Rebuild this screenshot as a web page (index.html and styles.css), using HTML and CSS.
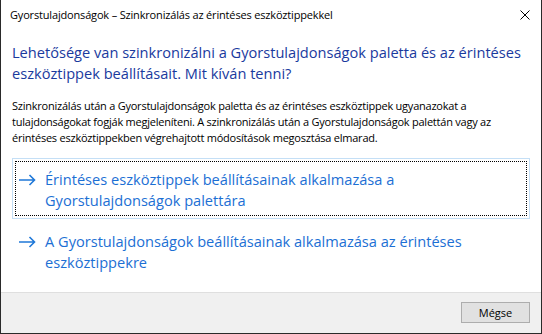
FILE: index.html
```html
<!DOCTYPE html>
<html lang="hu">
<head>
<meta charset="utf-8">
<title>Gyorstulajdonságok</title>
<link rel="stylesheet" href="styles.css">
</head>
<body>
<div class="window">
  <div class="titlebar">
    <span class="title">Gyorstulajdonságok – Szinkronizálás az érintéses eszköztippekkel</span>
    <span class="close" aria-label="Bezárás">
      <svg width="10" height="10" viewBox="0 0 10 10"><path d="M0.5 0.5 L9.5 9.5 M9.5 0.5 L0.5 9.5" stroke="#000" stroke-width="1" fill="none"/></svg>
    </span>
  </div>
  <div class="main">
    <div class="instruction">Lehetősége van szinkronizálni a Gyorstulajdonságok paletta és az érintéses<br>eszköztippek beállításait. Mit kíván tenni?</div>
    <div class="desc">Szinkronizálás után a Gyorstulajdonságok paletta és az érintéses eszköztippek ugyanazokat a<br>tulajdonságokat fogják megjeleníteni. A szinkronizálás után a Gyorstulajdonságok palettán vagy az<br>érintéses eszköztippekben végrehajtott módosítások megosztása elmarad.</div>
    <div class="cmd cmd-focused">
      <span class="arrow"><svg width="17" height="12" viewBox="0 0 17 12"><path d="M0 6 H15.5 M10.5 1 L15.5 6 L10.5 11" stroke="#1f78d8" stroke-width="1.6" fill="none"/></svg></span>
      <span class="cmd-text">Érintéses eszköztippek beállításainak alkalmazása a<br>Gyorstulajdonságok palettára</span>
    </div>
    <div class="cmd">
      <span class="arrow"><svg width="17" height="12" viewBox="0 0 17 12"><path d="M0 6 H15.5 M10.5 1 L15.5 6 L10.5 11" stroke="#1f78d8" stroke-width="1.6" fill="none"/></svg></span>
      <span class="cmd-text">A Gyorstulajdonságok beállításainak alkalmazása az érintéses<br>eszköztippekre</span>
    </div>
  </div>
  <div class="footer">
    <button class="btn">Mégse</button>
  </div>
</div>
</body>
</html>
```
FILE: styles.css
```css
html, body {
  margin: 0;
  padding: 0;
  background: #fff;
}
.window {
  box-sizing: border-box;
  width: 542px;
  height: 334px;
  border: 1px solid #2a2a2a;
  border-top: none;
  display: flex;
  flex-direction: column;
  font-family: "Open Sans", "Noto Sans", sans-serif;
  color: #000;
  background: #fff;
}
.titlebar {
  height: 29px;
  display: flex;
  align-items: center;
  justify-content: space-between;
  padding: 0 11px 0 9px;
  flex: none;
}
.title {
  font-size: 11px;
  letter-spacing: -0.17px;
  line-height: 16px;
}
.close {
  display: flex;
  width: 10px;
  height: 10px;
}
.main {
  flex: 1;
  padding: 13px 11px 0 11px;
}
.instruction {
  font-size: 14.6px;
  line-height: 21px;
  color: #1a3a9e;
}
.desc {
  margin-top: 14px;
  font-size: 11px;
  letter-spacing: -0.23px;
  line-height: 16px;
}
.cmd {
  margin-top: 12px;
  display: flex;
  align-items: flex-start;
  border: 1px solid transparent;
  padding: 10px 6px 7px 6px;
  color: #1c6fd4;
  font-size: 14.6px;
  line-height: 21px;
}
.cmd + .cmd {
  margin-top: 1px;
}
.cmd-focused {
  border-color: #c4dff6;
  outline: 1px dotted #000;
  outline-offset: -4px;
}
.arrow {
  display: flex;
  align-items: center;
  height: 21px;
  width: 17px;
  margin-right: 9px;
  flex: none;
}
.footer {
  flex: none;
  height: 41px;
  box-sizing: border-box;
  border-top: 1px solid #dfdfdf;
  background: #f0f0f0;
  display: flex;
  justify-content: flex-end;
  align-items: flex-start;
  padding: 9px 11px 0 0;
}
.btn {
  box-sizing: border-box;
  width: 69px;
  height: 21px;
  background: #e1e1e1;
  border: 1px solid #adadad;
  font-family: "Open Sans", "Noto Sans", sans-serif;
  font-size: 11px;
  color: #000;
  padding: 0;
  margin: 0;
}
```
